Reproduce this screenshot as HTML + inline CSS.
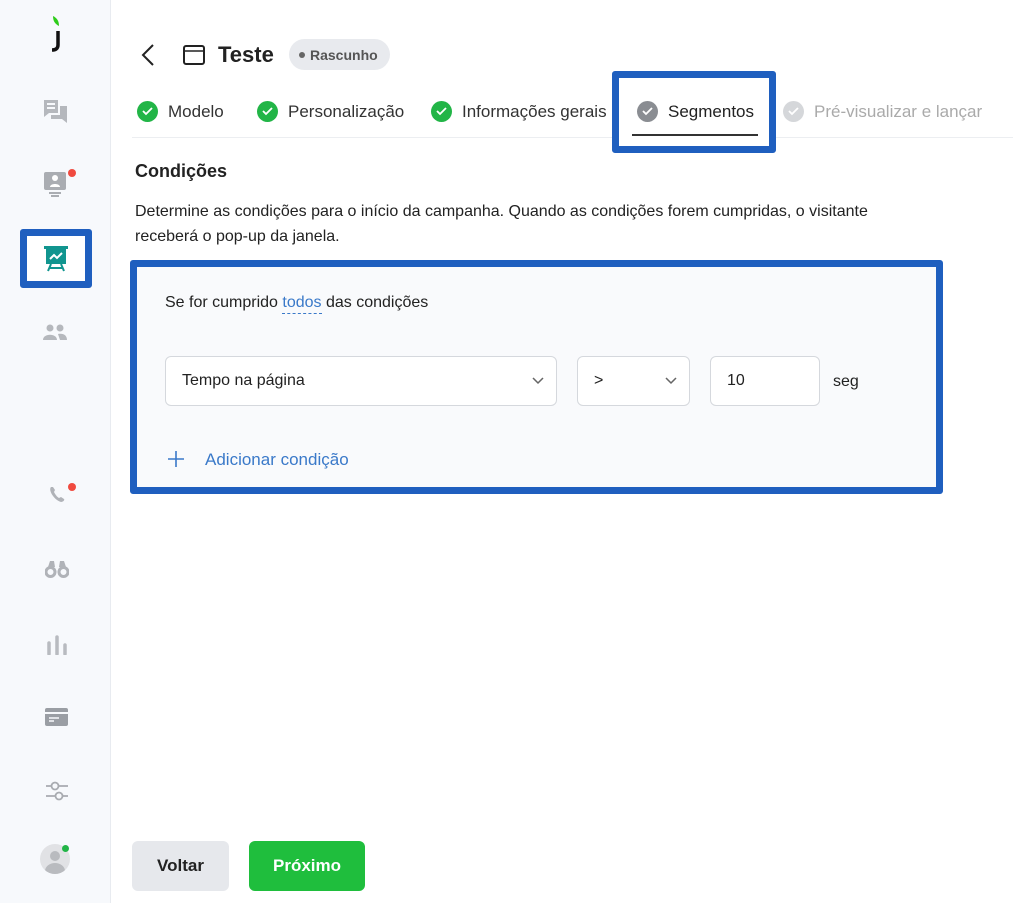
<!DOCTYPE html>
<html><head><meta charset="utf-8"><style>
*{box-sizing:border-box;margin:0;padding:0}
body{width:1013px;height:903px;background:#fff;font-family:"Liberation Sans",sans-serif;color:#222;position:relative;overflow:hidden}
.abs{position:absolute}
.side{left:0;top:0;width:111px;height:903px;background:#f7f9fc;border-right:1px solid #e8ebf0}
.ic{position:absolute;left:43px}
.dot{position:absolute;width:8px;height:8px;border-radius:50%}
.tab{position:absolute;top:101px;font-size:17px;color:#333;display:flex;align-items:center;gap:10px}
.chk{width:21px;height:21px;border-radius:50%;background:#22b547;display:flex;align-items:center;justify-content:center}
.sel{position:absolute;height:50px;border:1px solid #d5d8dd;border-radius:6px;background:#fff;font-size:16px;display:flex;align-items:center;padding-left:16px}
</style></head><body>
<div class="abs side">
 <svg class="abs" style="left:48px;top:15px" width="18" height="38" viewBox="0 0 18 38"><path d="M5 1c4 2 6 5 6 10-4-2-6-5-6-10z" fill="#2ecc1a"/><path d="M10 16v14c0 4-3 5-6 5" stroke="#111" stroke-width="3.5" fill="none"/></svg>
 <svg class="ic" style="top:98px" width="26" height="28" viewBox="0 0 26 28"><path d="M1 2h14v13H6l-5 4z" fill="#b5b8bd"/><path d="M17 8h7v17l-5-4H8v-4h9z" fill="#b5b8bd"/><path d="M4 6h8M4 10h8" stroke="#f7f9fc" stroke-width="2"/></svg>
 <svg class="ic" style="top:170px" width="26" height="30" viewBox="0 0 26 30"><rect x="1" y="2" width="22" height="18" rx="2" fill="#aaadb2"/><circle cx="12" cy="8" r="3" fill="#fff"/><path d="M7 17c0-4 10-4 10 0z" fill="#fff"/><path d="M6 23h12M8 26h8" stroke="#aaadb2" stroke-width="2"/></svg>
 <div class="dot" style="left:68px;top:169px;background:#f04a3f"></div>
 <div class="abs" style="left:20px;top:229px;width:72px;height:59px;border:7px solid #1f5fbf;border-radius:3px;background:#fff"></div>
 <svg class="ic" style="left:44px;top:245px" width="24" height="28" viewBox="0 0 24 28"><rect x="0" y="1" width="24" height="3" fill="#11958f"/><rect x="2" y="3" width="20" height="16" fill="#11958f"/><path d="M6 14l4-4 3 3 5-5" stroke="#fff" stroke-width="2" fill="none"/><path d="M7 19l-3 7M17 19l3 7M5 23h14" stroke="#11958f" stroke-width="2"/></svg>
 <svg class="ic" style="top:324px" width="24" height="18" viewBox="0 0 24 18"><circle cx="7" cy="4" r="3.5" fill="#b5b8bd"/><circle cx="17" cy="4" r="3.5" fill="#b5b8bd"/><path d="M0 16c0-7 14-7 14 0zM15 10c5-1 9 1 9 6h-7z" fill="#b5b8bd"/></svg>
 <svg class="ic" style="left:47px;top:485px" width="20" height="20" viewBox="0 0 20 20"><path d="M4 2c-3 3 3 13 10 15 2 0 4-2 3-3l-3-2-2 1c-2-1-4-4-5-6l1-2-2-3z" fill="#b0b3b8"/></svg>
 <div class="dot" style="left:68px;top:483px;background:#f04a3f"></div>
 <svg class="ic" style="left:45px;top:560px" width="24" height="18" viewBox="0 0 24 18"><circle cx="5.5" cy="12" r="4.5" stroke="#b0b3b8" stroke-width="3" fill="none"/><circle cx="18.5" cy="12" r="4.5" stroke="#b0b3b8" stroke-width="3" fill="none"/><path d="M3 7l2-6h4l1 6zM14 7l1-6h4l2 6z" fill="#b0b3b8"/></svg>
 <svg class="ic" style="left:46px;top:635px" width="22" height="20" viewBox="0 0 22 20"><path d="M3 8v11M11 2v17M19 10v9" stroke="#b8bbc0" stroke-width="3.5" stroke-linecap="round"/></svg>
 <svg class="ic" style="left:45px;top:708px" width="24" height="18" viewBox="0 0 24 18"><rect x="0" y="0" width="23" height="18" rx="2" fill="#9a9ea4"/><path d="M0 5h23" stroke="#f7f9fc" stroke-width="2"/><path d="M4 10h10M4 13h5" stroke="#f7f9fc" stroke-width="1.6"/></svg>
 <svg class="ic" style="left:45px;top:780px" width="24" height="22" viewBox="0 0 24 22"><path d="M1 6h22M1 16h22" stroke="#a8abb0" stroke-width="1.8"/><circle cx="10" cy="6" r="3.5" fill="#f7f9fc" stroke="#a8abb0" stroke-width="1.8"/><circle cx="14" cy="16" r="3.5" fill="#f7f9fc" stroke="#a8abb0" stroke-width="1.8"/></svg>
 <div class="abs" style="left:40px;top:844px;width:30px;height:30px;border-radius:50%;background:#e1e2e5;overflow:hidden"><div class="abs" style="left:10px;top:7px;width:10px;height:10px;border-radius:50%;background:#b9bbbf"></div><div class="abs" style="left:5px;top:19px;width:20px;height:16px;border-radius:50%;background:#b9bbbf"></div></div>
 <div class="dot" style="left:62px;top:845px;background:#22b547;width:7px;height:7px"></div>
</div>

<svg class="abs" style="left:140px;top:43px" width="16" height="24" viewBox="0 0 16 24"><path d="M13 2L3 12l10 10" stroke="#222" stroke-width="2" fill="none"/></svg>
<svg class="abs" style="left:183px;top:45px" width="22" height="20" viewBox="0 0 22 20"><rect x="1" y="1" width="20" height="18" rx="2" stroke="#222" stroke-width="2" fill="none"/><path d="M1 6h20" stroke="#222" stroke-width="1.6"/></svg>
<div class="abs" style="left:218px;top:42px;font-size:22px;font-weight:bold;color:#222">Teste</div>
<div class="abs" style="left:289px;top:39px;width:101px;height:31px;border-radius:16px;background:#e8eaee;font-size:14px;font-weight:bold;color:#555;display:flex;align-items:center;padding-left:10px"><span style="width:6px;height:6px;border-radius:50%;background:#666;margin-right:5px"></span>Rascunho</div>

<div class="abs" style="left:132px;top:137px;width:881px;height:1px;background:#eceef1"></div>
<div class="tab" style="left:137px"><div class="chk"><svg width="11" height="9" viewBox="0 0 11 9"><path d="M1 4l3 3 6-6" stroke="#fff" stroke-width="1.8" fill="none"/></svg></div>Modelo</div>
<div class="tab" style="left:257px"><div class="chk"><svg width="11" height="9" viewBox="0 0 11 9"><path d="M1 4l3 3 6-6" stroke="#fff" stroke-width="1.8" fill="none"/></svg></div>Personalização</div>
<div class="tab" style="left:431px"><div class="chk"><svg width="11" height="9" viewBox="0 0 11 9"><path d="M1 4l3 3 6-6" stroke="#fff" stroke-width="1.8" fill="none"/></svg></div>Informações gerais</div>
<div class="abs" style="left:612px;top:71px;width:164px;height:82px;border:7px solid #1f5fbf;border-radius:3px;background:#fff"></div>
<div class="tab" style="left:637px;color:#222"><div class="chk" style="background:#8a8d92"><svg width="11" height="9" viewBox="0 0 11 9"><path d="M1 4l3 3 6-6" stroke="#fff" stroke-width="1.8" fill="none"/></svg></div>Segmentos</div>
<div class="abs" style="left:632px;top:134px;width:126px;height:2px;background:#333"></div>
<div class="tab" style="left:783px;color:#aaa"><div class="chk" style="background:#d5d7da"><svg width="11" height="9" viewBox="0 0 11 9"><path d="M1 4l3 3 6-6" stroke="#fff" stroke-width="1.8" fill="none"/></svg></div>Pré-visualizar e lançar</div>

<div class="abs" style="left:135px;top:161px;font-size:18px;font-weight:bold;color:#222">Condições</div>
<div class="abs" style="left:135px;top:199px;width:800px;font-size:16px;line-height:25px;color:#222">Determine as condições para o início da campanha. Quando as condições forem cumpridas, o visitante receberá o pop-up da janela.</div>

<div class="abs" style="left:130px;top:260px;width:813px;height:234px;border:7px solid #1f5fbf;border-radius:3px;background:#f9fafc"></div>
<div class="abs" style="left:165px;top:294px;font-size:16px;color:#222">Se for cumprido <span style="color:#3a79c9;border-bottom:1px dashed #3a79c9;padding-bottom:2px">todos</span> das condições</div>
<div class="sel" style="left:165px;top:356px;width:392px">Tempo na página<svg class="abs" style="right:12px;top:20px" width="12" height="8" viewBox="0 0 12 8"><path d="M1 1l5 5 5-5" stroke="#666" stroke-width="1.5" fill="none"/></svg></div>
<div class="sel" style="left:577px;top:356px;width:113px">&gt;<svg class="abs" style="right:12px;top:20px" width="12" height="8" viewBox="0 0 12 8"><path d="M1 1l5 5 5-5" stroke="#666" stroke-width="1.5" fill="none"/></svg></div>
<div class="sel" style="left:710px;top:356px;width:110px">10</div>
<div class="abs" style="left:833px;top:373px;font-size:16px">seg</div>
<svg class="abs" style="left:167px;top:450px" width="18" height="18" viewBox="0 0 18 18"><path d="M9 1v16M1 9h16" stroke="#3a79c9" stroke-width="1.6"/></svg>
<div class="abs" style="left:205px;top:450px;font-size:17px;color:#3a79c9">Adicionar condição</div>

<div class="abs" style="left:132px;top:841px;width:97px;height:50px;border-radius:6px;background:#e6e8ec;font-size:17px;font-weight:bold;color:#222;display:flex;align-items:center;justify-content:center">Voltar</div>
<div class="abs" style="left:249px;top:841px;width:116px;height:50px;border-radius:6px;background:#1fbe3d;font-size:17px;font-weight:bold;color:#fff;display:flex;align-items:center;justify-content:center">Próximo</div>
</body></html>
